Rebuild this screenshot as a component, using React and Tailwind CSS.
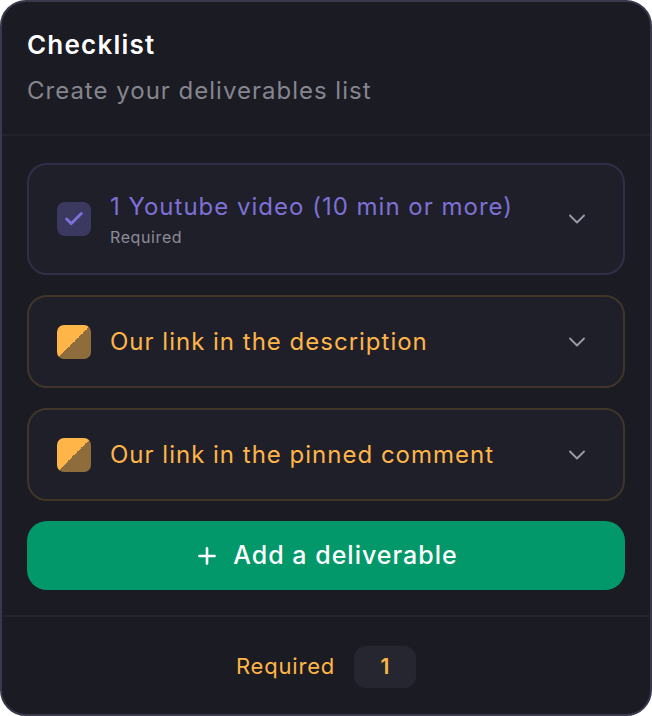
import { Check, ChevronDown, Plus } from "lucide-react";

const items = [
    { title: "1 Youtube video (10 min or more)", required: true, done: true },
    { title: "Our link in the description", required: false, done: false },
    { title: "Our link in the pinned comment", required: false, done: false },
];

const DoneBox = () => (
    <div className="w-[34px] h-[34px] rounded-[8px] bg-[#3b3960] flex items-center justify-center shrink-0">
        <Check size={22} strokeWidth={3.2} className="text-[#7d70da]" />
    </div>
);

const PendingBox = () => (
    <div
        className="w-[34px] h-[34px] rounded-[7px] shrink-0 bg-[linear-gradient(135deg,#ffb548_50%,#8f6c3b_50%)]"
    />
);

const Item = ({ item }) => {
    const done = item.done;
    return (
        <div
            className={
                done
                    ? "flex items-center rounded-[20px] border-2 border-[#302f4a] bg-[#1f1f2a] pl-[28px] pr-[32px] h-[112px]"
                    : "flex items-center rounded-[20px] border-2 border-[#3f3628] bg-[#1f1f2a] pl-[28px] pr-[32px] h-[93px]"
            }
        >
            {done ? <DoneBox /> : <PendingBox />}
            <div className="flex-1 ml-[19px] flex flex-col">
                <span
                    className={
                        done
                            ? "text-[24px] leading-[30px] tracking-[1px] text-[#7d70d6]"
                            : "text-[24px] leading-[30px] tracking-[1px] text-[#ffb548]"
                    }
                >
                    {item.title}
                </span>
                {item.required && (
                    <span className="text-[16px] leading-[20px] mt-[5px] tracking-[0.6px] text-[#8c8c98]">Required</span>
                )}
            </div>
            <ChevronDown size={28} strokeWidth={1.6} className="text-[#9a9aab]" />
        </div>
    );
};

const App = () => {
    return (
        <div className="w-[652px] h-[716px] bg-white" style={{ fontFamily: "Inter, 'Noto Sans', sans-serif" }}>
            <div className="w-full h-full rounded-[26px] border-2 border-[#3a394c] bg-[#1b1b23] flex flex-col overflow-hidden">
                <div className="px-[25px] pt-[26px] h-[134px] border-b-2 border-[#23232d]">
                    <h1 className="text-[26px] leading-[34px] font-semibold tracking-[1.2px] text-white">Checklist</h1>
                    <p className="text-[24px] leading-[34px] mt-[12px] tracking-[1px] text-[#85858f]">Create your deliverables list</p>
                </div>

                <div className="px-[25px] pt-[27px] pb-[25px] flex flex-col gap-[20px] border-b-2 border-[#23232d]">
                    {items.map((item) => (
                        <Item key={item.title} item={item} />
                    ))}
                    <button className="h-[69px] rounded-[20px] bg-[#029869] text-white text-[25px] font-medium tracking-[1px] flex items-center justify-center gap-[13px]">
                        <Plus size={26} strokeWidth={2.4} />
                        Add a deliverable
                    </button>
                </div>

                <div className="flex-1 flex items-center justify-center gap-[19px] pt-[2px]">
                    <span className="text-[22px] tracking-[0.8px] text-[#ffb548]">Required</span>
                    <span className="w-[62px] h-[42px] rounded-[12px] bg-[#262630] flex items-center justify-center text-[21px] font-semibold text-[#ffb548]">
                        1
                    </span>
                </div>
            </div>
        </div>
    );
};

export default App;
